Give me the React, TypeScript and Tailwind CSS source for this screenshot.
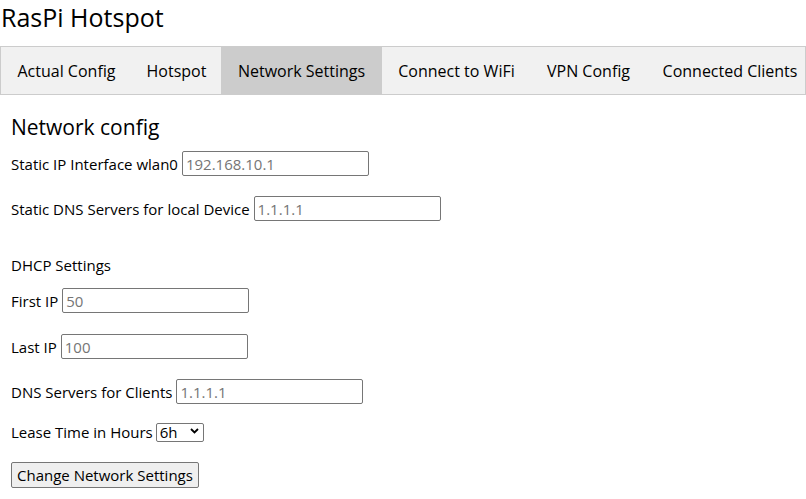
import React from "react";

const tabs = [
  { label: "Actual Config", w: "w-[131px]" },
  { label: "Hotspot", w: "w-[89px]" },
  { label: "Network Settings", w: "w-[161px]", active: true },
  { label: "Connect to WiFi", w: "w-[149px]" },
  { label: "VPN Config", w: "w-[115px]" },
  { label: "Connected Clients", w: "w-[168px]" },
];

const Field = ({
  label,
  placeholder,
  className,
}: {
  label: string;
  placeholder: string;
  className: string;
}) => (
  <div className={`flex items-baseline ${className}`}>
    <label className="mr-[4px]">{label}</label>
    <input
      type="text"
      placeholder={placeholder}
      className="w-[187px] h-[25px] px-[3px] border border-[#767676] rounded-[2px] bg-white text-[15px] placeholder:text-[#757575] outline-none"
    />
  </div>
);

const App: React.FC = () => {
  return (
    <div className="w-[806px] h-[499px] overflow-hidden bg-white text-black font-['Open_Sans',sans-serif]">
      <div className="h-[46px] pt-[1px] pl-[1px] text-[25px] leading-[32px]">RasPi Hotspot</div>

      <div className="flex h-[49px] border border-[#cccccc] bg-[#f1f1f1] overflow-hidden">
        {tabs.map((t) => (
          <button
            key={t.label}
            className={`${t.w} shrink-0 flex items-center justify-center text-[16px] ${
              t.active ? "bg-[#cccccc]" : ""
            }`}>
            {t.label}
          </button>
        ))}
      </div>

      <div className="px-[11px] text-[15px] leading-[20px]">
        <h2 className="mt-[18px] text-[21px] leading-[28px]">Network config</h2>

        <Field label="Static IP Interface wlan0" placeholder="192.168.10.1" className="mt-[10px]" />
        <Field label="Static DNS Servers for local Device" placeholder="1.1.1.1" className="mt-[20px]" />

        <div className="mt-[34px]">DHCP Settings</div>

        <Field label="First IP" placeholder="50" className="mt-[13px]" />
        <Field label="Last IP" placeholder="100" className="mt-[21px]" />
        <Field label="DNS Servers for Clients" placeholder="1.1.1.1" className="mt-[20px]" />

        <div className="flex items-baseline mt-[18px]">
          <label className="mr-[3px]">Lease Time in Hours</label>
          <div className="relative">
            <select
              defaultValue="6h"
              className="appearance-none w-[48px] h-[19px] pl-[3px] border border-[#767676] rounded-[2px] bg-white text-[15px] leading-[17px] outline-none">
              <option>1h</option>
              <option>6h</option>
              <option>12h</option>
              <option>24h</option>
            </select>
            <svg
              className="absolute right-[5px] top-[6px] pointer-events-none"
              width="9"
              height="6"
              viewBox="0 0 9 6">
              <path d="M1 1l3.5 3.5L8 1" fill="none" stroke="#000" strokeWidth="1.8" />
            </svg>
          </div>
        </div>

        <button className="mt-[20px] h-[26px] px-[5px] border border-[#767676] rounded-[2px] bg-[#efefef] text-[15px]">
          Change Network Settings
        </button>
      </div>
    </div>
  );
};

export default App;
